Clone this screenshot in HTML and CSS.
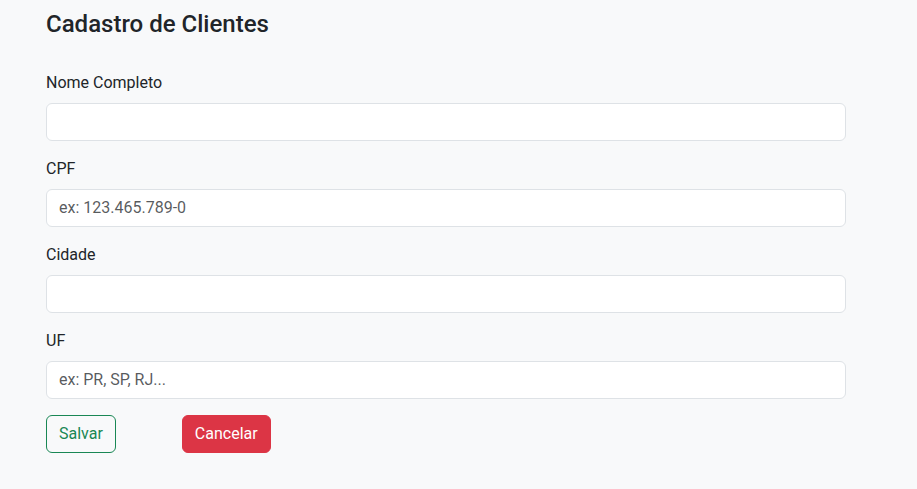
FILE: index.html
```html
<!DOCTYPE html>
<html lang="pt-BR">
<head>
<meta charset="utf-8">
<title>Cadastro de Clientes</title>
<link rel="stylesheet" href="styles.css">
</head>
<body>
<main class="page">
  <h3 class="title">Cadastro de Clientes</h3>
  <form class="form">
    <div class="field">
      <label class="label" for="nome">Nome Completo</label>
      <input class="input" id="nome" type="text">
    </div>
    <div class="field">
      <label class="label" for="cpf">CPF</label>
      <input class="input" id="cpf" type="text" placeholder="ex: 123.465.789-0">
    </div>
    <div class="field">
      <label class="label" for="cidade">Cidade</label>
      <input class="input" id="cidade" type="text">
    </div>
    <div class="field">
      <label class="label" for="uf">UF</label>
      <input class="input" id="uf" type="text" placeholder="ex: PR, SP, RJ...">
    </div>
    <div class="actions">
      <button type="button" class="btn btn-outline-success">Salvar</button>
      <button type="button" class="btn btn-danger">Cancelar</button>
    </div>
  </form>
</main>
</body>
</html>
```
FILE: styles.css
```css
* { box-sizing: border-box; }
html, body { margin: 0; padding: 0; }
body {
  background: #f8f9fa;
  color: #212529;
  font-family: Roboto, "Liberation Sans", sans-serif;
  font-size: 16px;
  line-height: 1.5;
}
.page {
  padding: 10px 46px 0 46px;
  width: 892px;
}
.title {
  margin: 0 0 32px 0;
  font-size: 24px;
  font-weight: 500;
  line-height: 1.2;
}
.form { display: flex; flex-direction: column; }
.field { display: flex; flex-direction: column; margin-bottom: 16px; }
.label { margin-bottom: 8px; line-height: 24px; }
.input {
  width: 800px;
  height: 38px;
  padding: 6px 12px;
  font-family: inherit;
  font-size: 16px;
  line-height: 1.5;
  color: #212529;
  background: #fff;
  border: 1px solid #dee2e6;
  border-radius: 6px;
  outline: none;
}
.input::placeholder { color: rgba(33, 37, 41, 0.75); }
.actions { display: flex; gap: 66px; }
.btn {
  height: 38px;
  padding: 6px 12px;
  font-family: inherit;
  font-size: 16px;
  line-height: 1.5;
  border-radius: 6px;
  border: 1px solid transparent;
  cursor: pointer;
}
.btn-outline-success { color: #198754; border-color: #198754; background: transparent; }
.btn-danger { color: #fff; background: #dc3545; border-color: #dc3545; }
```
